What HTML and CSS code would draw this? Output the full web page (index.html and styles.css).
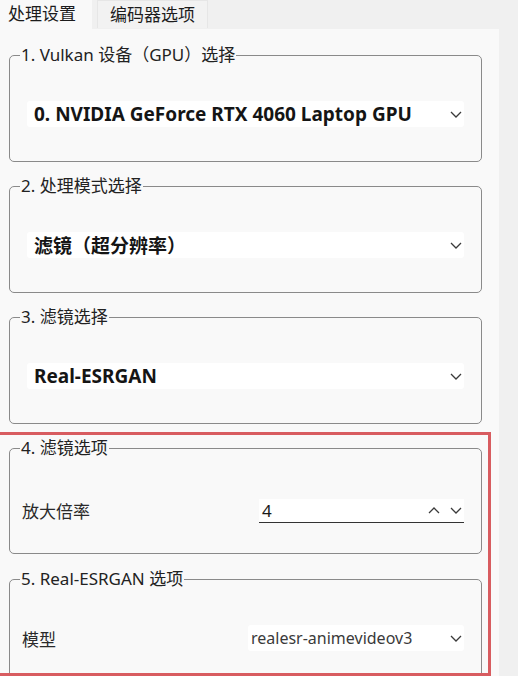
FILE: index.html
```html
<!DOCTYPE html>
<html lang="zh-CN">
<head>
<meta charset="utf-8">
<title>处理设置</title>
<link rel="stylesheet" href="styles.css">
</head>
<body>
<div class="window">
  <div class="tabs">
    <div class="tab active">处理设置</div>
    <div class="tab">编码器选项</div>
  </div>
  <div class="panel">
    <fieldset class="group">
      <legend>1. Vulkan 设备（GPU）选择</legend>
      <div class="combo bold">
        <span>0. NVIDIA GeForce RTX 4060 Laptop GPU</span>
        <svg class="chev" width="12" height="7" viewBox="0 0 12 7"><path d="M1 1 L6 6 L11 1"/></svg>
      </div>
    </fieldset>
    <fieldset class="group">
      <legend>2. 处理模式选择</legend>
      <div class="combo bold">
        <span>滤镜（超分辨率）</span>
        <svg class="chev" width="12" height="7" viewBox="0 0 12 7"><path d="M1 1 L6 6 L11 1"/></svg>
      </div>
    </fieldset>
    <fieldset class="group">
      <legend>3. 滤镜选择</legend>
      <div class="combo bold">
        <span>Real-ESRGAN</span>
        <svg class="chev" width="12" height="7" viewBox="0 0 12 7"><path d="M1 1 L6 6 L11 1"/></svg>
      </div>
    </fieldset>
    <fieldset class="group group-4">
      <legend>4. 滤镜选项</legend>
      <div class="row">
        <span class="label">放大倍率</span>
        <div class="spin">
          <span class="spin-value">4</span>
          <span class="spin-btns">
            <svg class="chev" width="12" height="7" viewBox="0 0 12 7"><path d="M1 6 L6 1 L11 6"/></svg>
            <svg class="chev" width="12" height="7" viewBox="0 0 12 7"><path d="M1 1 L6 6 L11 1"/></svg>
          </span>
        </div>
      </div>
    </fieldset>
    <fieldset class="group group-5">
      <legend>5. Real-ESRGAN 选项</legend>
      <div class="row">
        <span class="label">模型</span>
        <div class="combo small">
          <span>realesr-animevideov3</span>
          <svg class="chev" width="12" height="7" viewBox="0 0 12 7"><path d="M1 1 L6 6 L11 1"/></svg>
        </div>
      </div>
    </fieldset>
  </div>
  <div class="highlight"></div>
</div>
</body>
</html>
```
FILE: styles.css
```css
html, body {
  margin: 0;
  padding: 0;
}
body {
  background: #f0f0f0;
  font-family: "Noto Sans", "Noto Sans CJK SC", sans-serif;
  color: #1c1c1c;
  width: 518px;
  height: 676px;
  overflow: hidden;
}
.window {
  position: relative;
  width: 518px;
  height: 676px;
  overflow: hidden;
}
.tabs {
  display: flex;
  height: 29px;
  align-items: flex-start;
}
.tab {
  font-size: 17px;
  line-height: 28px;
  height: 28px;
  padding: 0 12px;
  background: #f2f2f2;
  border: 1px solid #e6e6e6;
  border-bottom: none;
  margin-left: 5px;
  box-sizing: border-box;
}
.tab.active {
  margin-left: 0;
  height: 29px;
  width: 92px;
  padding: 0 8px;
  background: #f9f9f9;
  border: none;
}
.panel {
  width: 499px;
  height: 647px;
  background: #f9f9f9;
  padding: 16px 0 0;
  box-sizing: border-box;
  overflow: hidden;
}
.group {
  margin: 14px 17px 0 9px;
  padding: 36px 17px 34px;
  border: 1.5px solid #8a8a8a;
  border-radius: 5px;
  min-width: 0;
}
.group:first-child {
  margin-top: 0;
}
.group legend {
  font-size: 17px;
  line-height: 20px;
  padding: 0 1px;
  margin-left: -7px;
  color: #222;
}
.group-4 {
  margin-top: 14px;
  padding-top: 40px;
  padding-bottom: 30px;
}
.group-5 {
  margin-top: 15px;
}
.combo {
  display: flex;
  align-items: center;
  justify-content: space-between;
  height: 26px;
  background: #ffffff;
  padding: 0 2px 0 7px;
  border-radius: 3px;
}
.combo.bold {
  font-weight: 700;
  font-size: 19px;
  color: #151515;
}
.chev path {
  fill: none;
  stroke: #3a3a3a;
  stroke-width: 1.3;
}
.row {
  display: flex;
  align-items: center;
  padding-left: 12px;
  margin-left: -17px;
}
.label {
  font-size: 17px;
  color: #2a2a2a;
}
.spin {
  margin-left: auto;
  width: 205px;
  height: 24px;
  display: flex;
  align-items: center;
  justify-content: space-between;
  background: #ffffff;
  box-sizing: border-box;
  border-bottom: 1.5px solid #333;
  padding: 0 2px 0 3px;
}
.spin-value {
  font-size: 17px;
  color: #1a1a1a;
}
.spin-btns {
  display: flex;
  gap: 10px;
}
.combo.small {
  margin-left: auto;
  width: 216px;
  box-sizing: border-box;
  padding-left: 3px;
  font-size: 16px;
  color: #3a3a3a;
}
.highlight {
  position: absolute;
  left: -4px;
  top: 432px;
  width: 495px;
  height: 244px;
  box-sizing: border-box;
  border: 3.5px solid #d85c60;
  pointer-events: none;
}
```
